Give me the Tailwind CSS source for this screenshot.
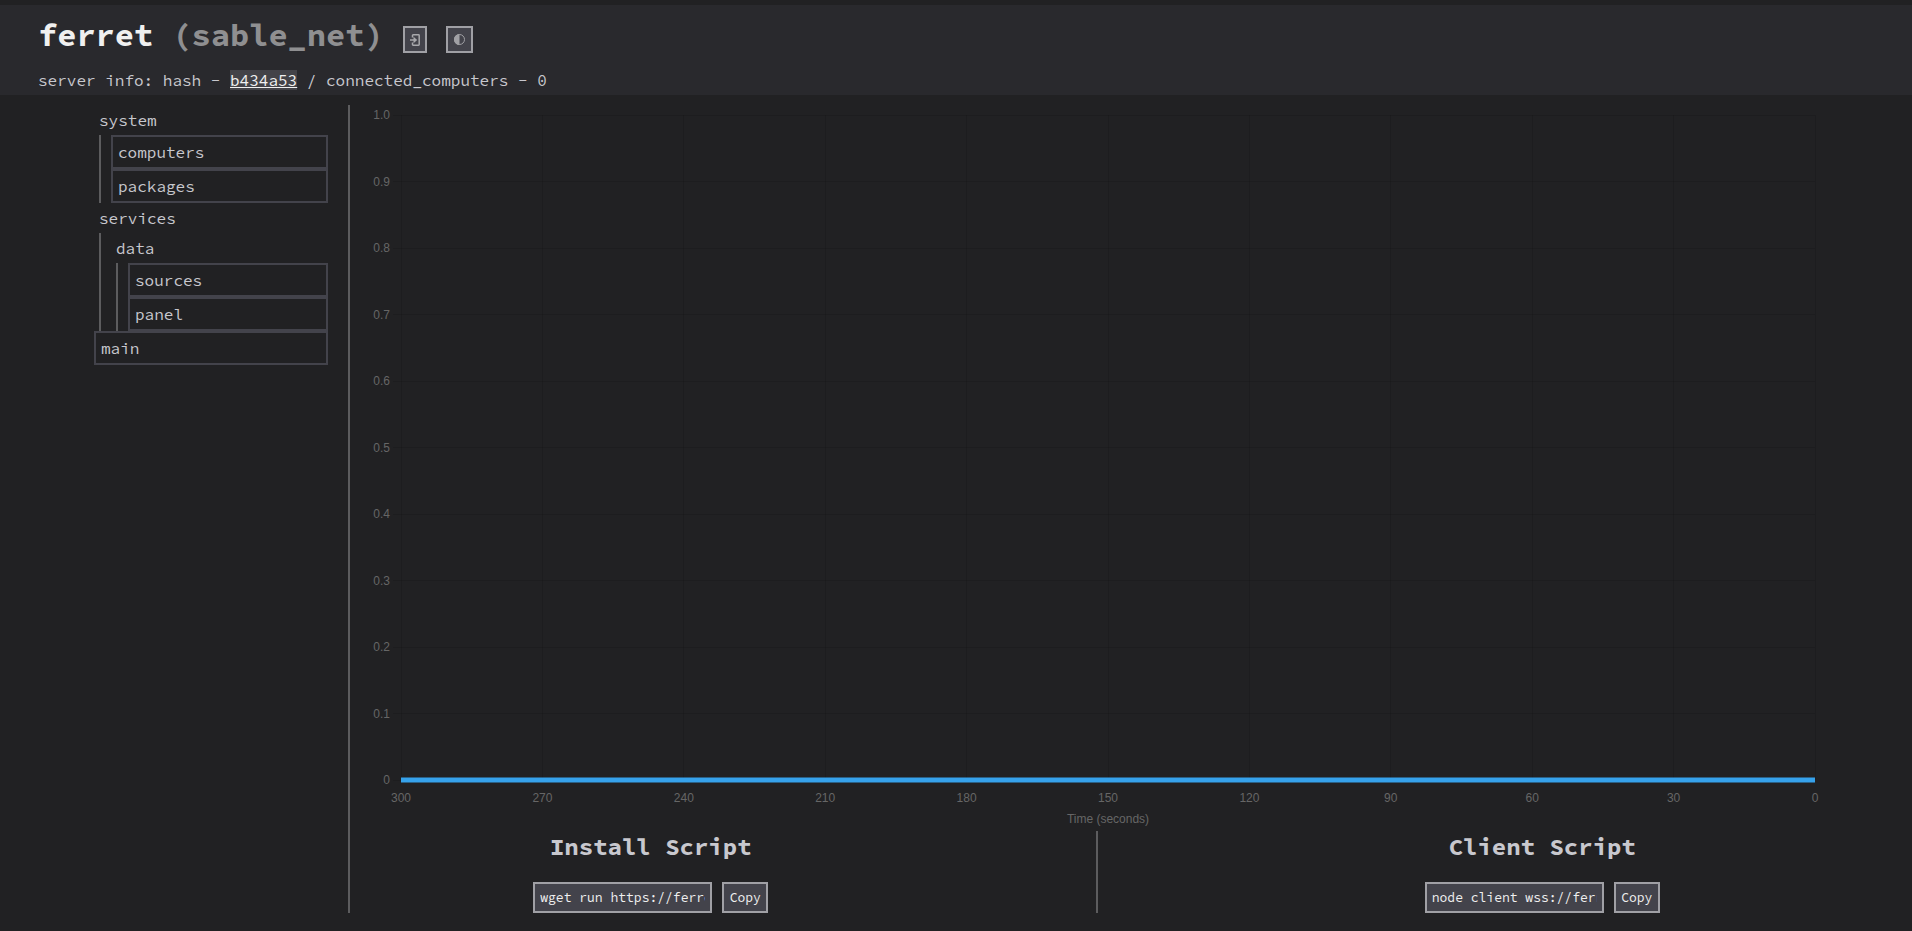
<!DOCTYPE html>
<html lang="en">
<head>
<meta charset="utf-8">
<title>ferret</title>
<script src="https://cdn.jsdelivr.net/npm/@tailwindcss/browser@4"></script>
</head>
<body class="flex min-h-screen flex-col bg-[#212123] pt-[5px] font-['Source_Code_Pro','DejaVu_Sans_Mono',monospace] text-[16px] leading-[30px] text-[#c8c8ce]">
<header class="h-[90px] bg-[#29292d] px-[38px] pt-2">
  <div class="flex items-start gap-[19px]">
    <h1 class="text-[32px] leading-[44px] font-bold whitespace-pre text-[#f0f0f0]">ferret <span class="text-[#8f8f91]">(sable_net)</span></h1>
    <button type="button" aria-label="Log out" class="mt-[13px] flex h-[27px] w-6 items-center justify-center border-2 border-[#a0a0a5] bg-[#43434b]">
      <svg class="h-3 w-[10px]" viewBox="0 0 10 12" fill="none" stroke="#a8a8ac" stroke-width="1.5"><path d="M2.500 3.500V1.500q0-.7.7-.7h5.300q.7 0 .7.7v9q0 .7-.7.7H3.200q-.7 0-.7-.7V8.500M0 6h5"/><path d="M3.500 2.800 7.200 6 3.500 9.200z" fill="#a8a8ac" stroke="none"/></svg>
    </button>
    <button type="button" aria-label="Toggle theme" class="mt-[13px] flex size-[27px] items-center justify-center border-2 border-[#a0a0a5] bg-[#43434b]">
      <svg class="size-[11px]" viewBox="0 0 11 11"><circle cx="5.500" cy="5.500" r="5" fill="none" stroke="#a0a0a5"/><path d="M5.500 0a5.500 5.500 0 0 0 0 11z" fill="#a0a0a5"/></svg>
    </button>
  </div>
  <p class="mt-[13px] leading-[20px]">server info: hash - <a href="#" class="inline-block bg-[#434348] text-[#f0f0f0] underline">b434a53</a> / connected_computers - 0</p>
</header>
<div class="flex flex-1 pt-[10px] pb-[18px]">
  <nav class="w-[350px] shrink-0 border-r-2 border-[#5c5c5e] pr-5 pl-[94px]">
    <div class="pl-[5px]">system</div>
    <div class="ml-[5px] border-l-2 border-[#5c5c5e] pl-[10px]">
      <a href="#" class="block border-2 border-[#43434b] px-[5px]">computers</a>
      <a href="#" class="block border-2 border-[#43434b] px-[5px]">packages</a>
    </div>
    <div class="pl-[5px]">services</div>
    <div class="ml-[5px] border-l-2 border-[#5c5c5e] pl-[10px]">
      <div class="pl-[5px]">data</div>
      <div class="ml-[5px] border-l-2 border-[#5c5c5e] pl-[10px]">
        <a href="#" class="block border-2 border-[#43434b] px-[5px]">sources</a>
        <a href="#" class="block border-2 border-[#43434b] px-[5px]">panel</a>
      </div>
    </div>
    <a href="#" class="block border-2 border-[#43434b] px-[5px]">main</a>
  </nav>
  <main class="flex min-w-0 flex-1 flex-col pr-[69px]">
    <div class="flex flex-1 pt-[10px] pr-7 pb-[51px] pl-[51px]">
      <svg id="chart" role="img" aria-label="History over the last 300 seconds" class="min-h-[300px] w-full overflow-visible font-['Liberation_Sans',sans-serif] text-[12px]" fill="#666"></svg>
    </div>
    <div class="flex">
      <section class="flex flex-1 flex-col items-center pr-36">
        <h2 class="text-[24px] leading-[32px] font-bold">Install Script</h2>
        <div class="mt-[19px] flex gap-[10px] text-[13px] leading-[27px] text-[#f0f0f0]">
          <input aria-label="Install Script" readonly value="wget run https://ferret.sable.net/install.sh" class="h-[31px] w-[179px] border-2 border-[#a0a0a5] bg-[#43434b] px-[5px]">
          <button type="button" class="h-[31px] w-[46px] border-2 border-[#a0a0a5] bg-[#43434b]">Copy</button>
        </div>
      </section>
      <div class="w-[2px] bg-[#5c5c5e]"></div>
      <section class="flex flex-1 flex-col items-center pl-36">
        <h2 class="text-[24px] leading-[32px] font-bold">Client Script</h2>
        <div class="mt-[19px] flex gap-[10px] text-[13px] leading-[27px] text-[#f0f0f0]">
          <input aria-label="Client Script" readonly value="node client wss://ferret.sable.net" class="h-[31px] w-[179px] border-2 border-[#a0a0a5] bg-[#43434b] px-[5px]">
          <button type="button" class="h-[31px] w-[46px] border-2 border-[#a0a0a5] bg-[#43434b]">Copy</button>
        </div>
      </section>
    </div>
  </main>
</div>
<script>
  // Grid and ticks in percentages, so that the chart follows its box.
  const grid = 'stroke="#000" stroke-opacity=".1" shape-rendering="crispEdges"';
  let out = '';
  for (let i = 0; i <= 10; i++) {
    const p = i * 10 + '%';
    const v = i === 0 ? '1.0' : i === 10 ? '0' : (1 - i / 10).toFixed(1);
    out += `<line x1="-8" x2="100%" y1="${p}" y2="${p}" ${grid}/><line x1="${p}" x2="${p}" y1="0" y2="100%" ${grid}/>`;
    out += `<text x="-11" y="${p}" dy="4" text-anchor="end">${v}</text>`;
    out += `<text x="${p}" y="100%" dy="22" text-anchor="middle">${300 - i * 30}</text>`;
  }
  out += '<text x="50%" y="100%" dy="43" text-anchor="middle">Time (seconds)</text>';
  out += '<line x1="0" x2="100%" y1="100%" y2="100%" stroke="#36a2eb" stroke-width="5"/>';
  document.getElementById('chart').innerHTML = out;
</script>
</body>
</html>
